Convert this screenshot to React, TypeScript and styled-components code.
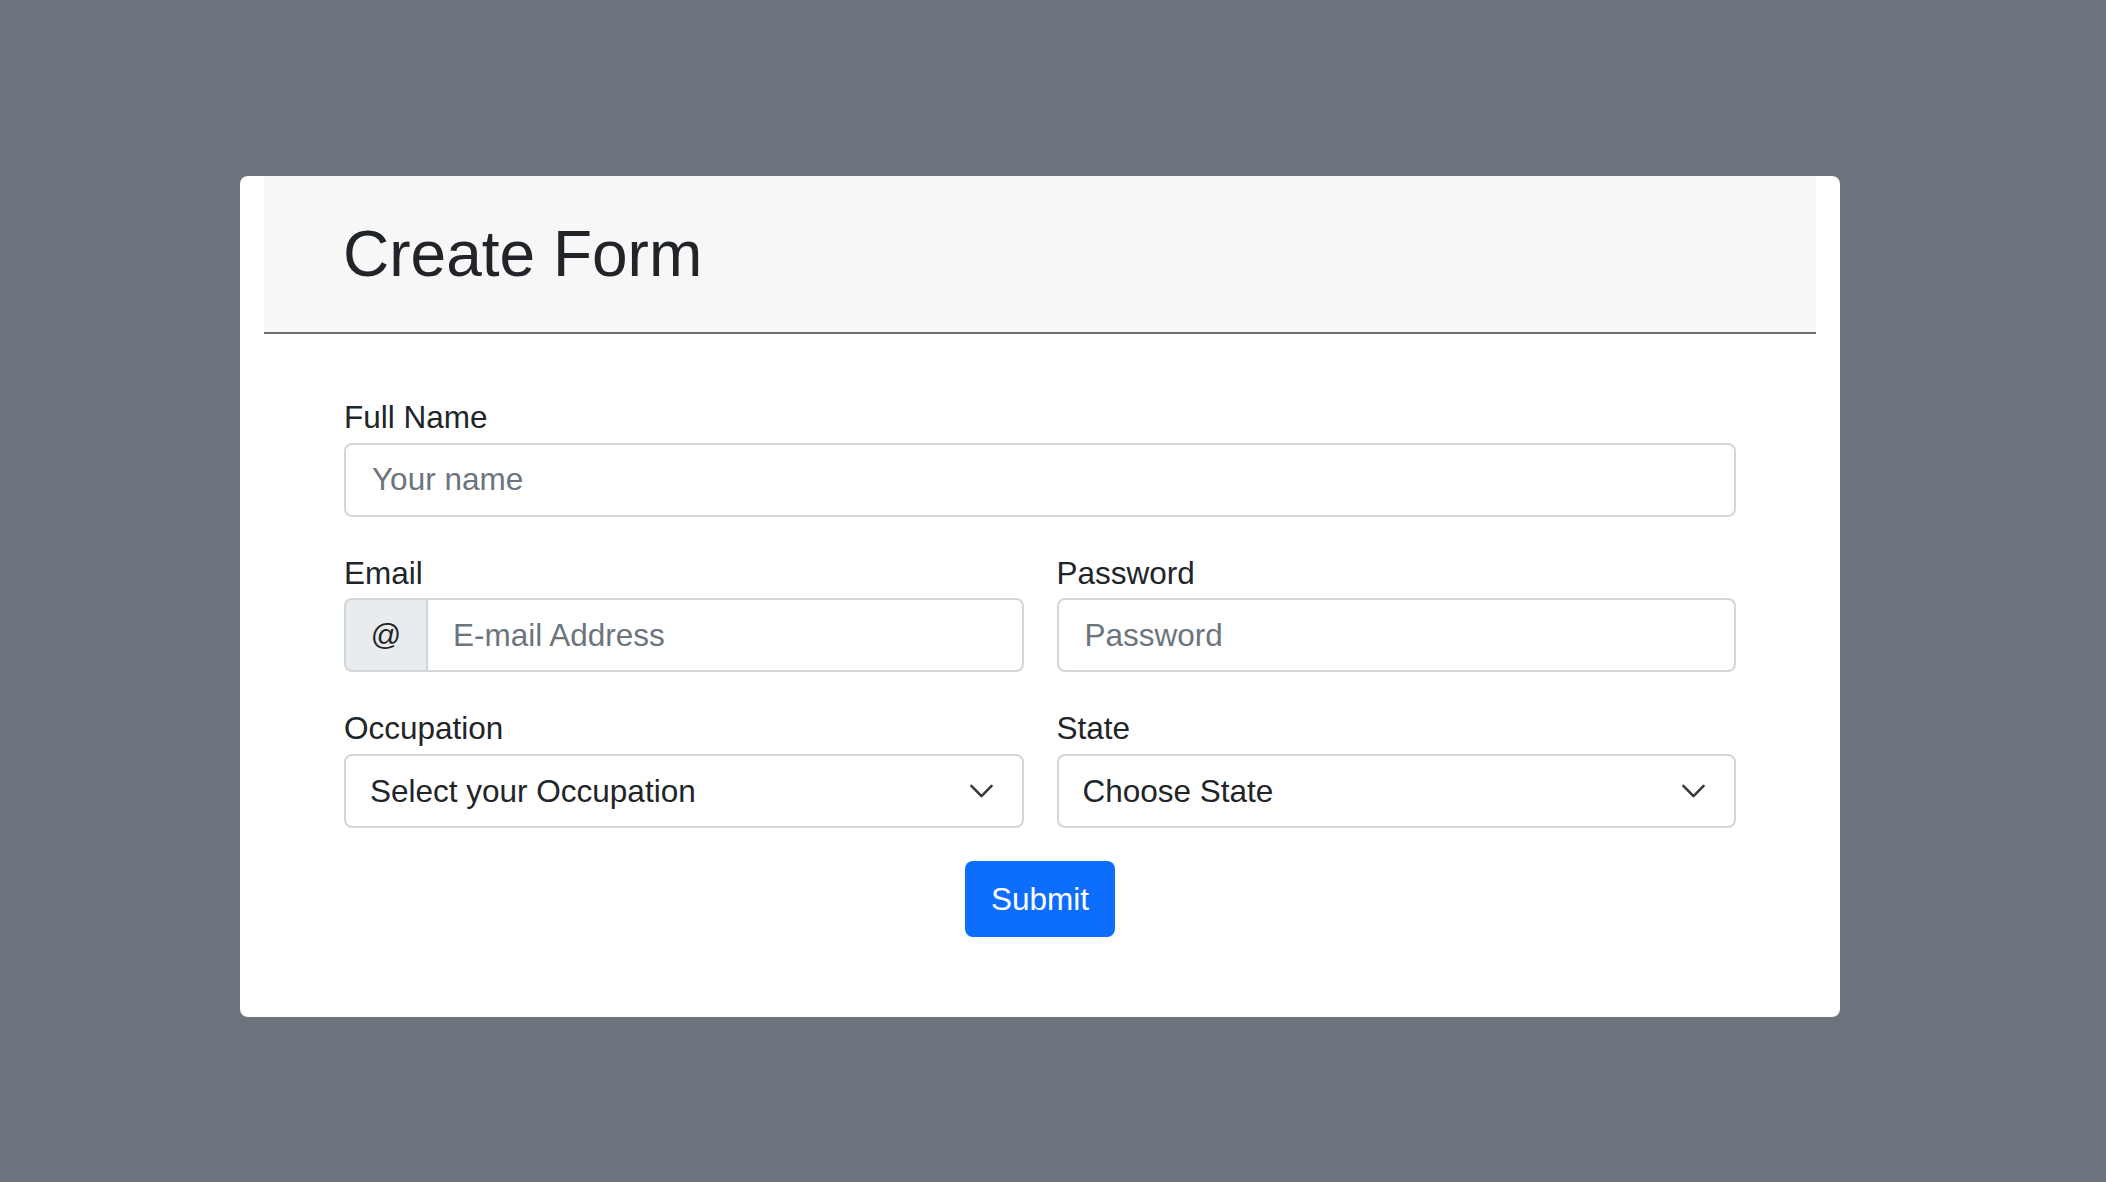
import React from 'react';
import styled, { createGlobalStyle } from 'styled-components';

const GlobalStyle = createGlobalStyle`
  html, body {
    margin: 0;
    padding: 0;
    background-color: #6c757d;
    font-family: "Liberation Sans", Arial, Helvetica, sans-serif;
    color: #212529;
  }

  * {
    box-sizing: border-box;
  }
`;

const Page = styled.div`
  min-height: 100vh;
  padding: 176px 0 0 240px;
`;

const Card = styled.div`
  width: 1600px;
  background-color: #ffffff;
  border-radius: 8px;
  overflow: hidden;
`;

const Header = styled.div`
  margin: 0 24px;
  padding: 40px 0 39px 79px;
  background-color: #f7f7f7;
  border-bottom: 2px solid #6a6f75;

  h1 {
    margin: 0;
    font-size: 64px;
    font-weight: 400;
    line-height: 1.2;
    color: #212529;
  }
`;

const Form = styled.form`
  display: flex;
  flex-direction: column;
  gap: 38px;
  padding: 65px 104px 80px 104px;
`;

const Row = styled.div<{ $cols?: number }>`
  display: grid;
  grid-template-columns: repeat(${(p) => p.$cols || 1}, 1fr);
  column-gap: 33px;
`;

const Field = styled.div`
  display: flex;
  flex-direction: column;
`;

const Label = styled.label`
  display: block;
  margin-bottom: 6px;
  font-size: 31.5px;
  line-height: 1.2;
  color: #212529;
`;

const Input = styled.input`
  width: 100%;
  height: 74px;
  padding: 0 26px;
  font-family: inherit;
  font-size: 31.5px;
  color: #212529;
  background-color: #ffffff;
  border: 2px solid #d1d6db;
  border-radius: 8px;
  outline: none;

  &::placeholder {
    color: #6c757d;
  }
`;

const InputGroup = styled.div`
  display: flex;
  width: 100%;

  ${Input} {
    flex: 1;
    padding-left: 25px;
    border-top-left-radius: 0;
    border-bottom-left-radius: 0;
  }
`;

const Addon = styled.span`
  display: flex;
  align-items: center;
  justify-content: center;
  width: 82px;
  height: 74px;
  font-size: 30px;
  color: #212529;
  background-color: #e9ecef;
  border: 2px solid #d1d6db;
  border-right: none;
  border-radius: 8px 0 0 8px;
`;

const SelectWrap = styled.div`
  position: relative;
  width: 100%;

  svg {
    position: absolute;
    right: 29px;
    top: 50%;
    transform: translateY(-50%);
    pointer-events: none;
  }
`;

const Select = styled.select`
  width: 100%;
  height: 74px;
  padding: 0 70px 0 24px;
  font-family: inherit;
  font-size: 31.5px;
  color: #212529;
  background-color: #ffffff;
  border: 2px solid #d1d6db;
  border-radius: 8px;
  outline: none;
  appearance: none;
  -webkit-appearance: none;
`;

const Actions = styled.div`
  display: flex;
  justify-content: center;
  margin-top: -5px;
`;

const SubmitButton = styled.button`
  height: 76px;
  padding: 0 26px;
  font-family: inherit;
  font-size: 31.5px;
  color: #ffffff;
  background-color: #0d6efd;
  border: none;
  border-radius: 8px;
  cursor: pointer;
`;

const Chevron = () => (
  <svg width="27" height="27" viewBox="0 0 16 16" fill="none">
    <path
      d="M2 5l6 6 6-6"
      stroke="#343a40"
      strokeWidth="1.5"
      strokeLinecap="round"
      strokeLinejoin="round"
    />
  </svg>
);

const App = () => {
  return (
    <>
      <GlobalStyle />
      <Page>
        <Card>
          <Header>
            <h1>Create Form</h1>
          </Header>
          <Form onSubmit={(e) => e.preventDefault()}>
            <Row>
              <Field>
                <Label htmlFor="name">Full Name</Label>
                <Input id="name" type="text" placeholder="Your name" />
              </Field>
            </Row>
            <Row $cols={2}>
              <Field>
                <Label htmlFor="email">Email</Label>
                <InputGroup>
                  <Addon>@</Addon>
                  <Input id="email" type="email" placeholder="E-mail Address" />
                </InputGroup>
              </Field>
              <Field>
                <Label htmlFor="password">Password</Label>
                <Input id="password" type="password" placeholder="Password" />
              </Field>
            </Row>
            <Row $cols={2}>
              <Field>
                <Label htmlFor="occupation">Occupation</Label>
                <SelectWrap>
                  <Select id="occupation" defaultValue="">
                    <option value="">Select your Occupation</option>
                    <option>Student</option>
                    <option>Engineer</option>
                    <option>Teacher</option>
                  </Select>
                  <Chevron />
                </SelectWrap>
              </Field>
              <Field>
                <Label htmlFor="state">State</Label>
                <SelectWrap>
                  <Select id="state" defaultValue="">
                    <option value="">Choose State</option>
                    <option>Lagos</option>
                    <option>Abuja</option>
                  </Select>
                  <Chevron />
                </SelectWrap>
              </Field>
            </Row>
            <Actions>
              <SubmitButton type="submit">Submit</SubmitButton>
            </Actions>
          </Form>
        </Card>
      </Page>
    </>
  );
};

export default App;
